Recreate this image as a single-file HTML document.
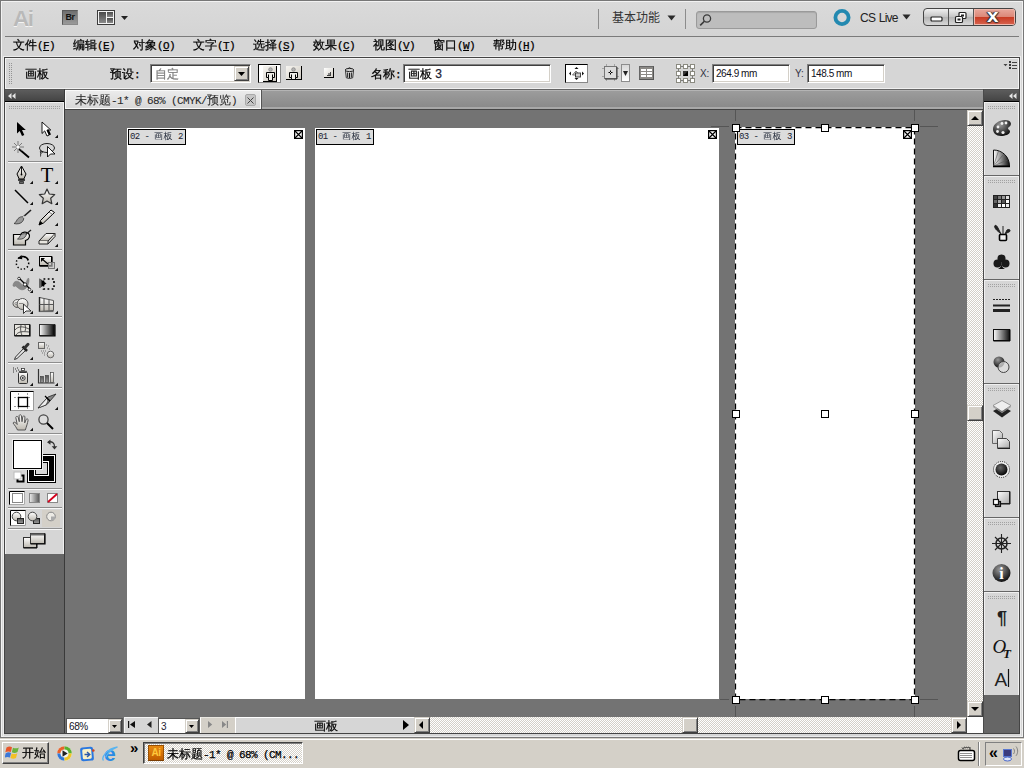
<!DOCTYPE html>
<html lang="zh-CN">
<head>
<meta charset="utf-8">
<title>Adobe Illustrator</title>
<style>
*{box-sizing:border-box;margin:0;padding:0}
html,body{width:1024px;height:768px;overflow:hidden;background:#d6d6d6}
body{position:relative;font-family:"Liberation Sans","WenQuanYi Zen Hei",sans-serif;font-size:12px;color:#000}
.a{position:absolute}
.cj{font-family:"Liberation Sans","WenQuanYi Zen Hei","Noto Sans CJK SC",sans-serif;font-size:12px;line-height:14px;white-space:nowrap;color:#000;-webkit-text-stroke-width:0.25px}
.cj i{font-style:normal;font-family:"Liberation Mono",monospace;font-size:11px;letter-spacing:-0.6px}
.cj u{text-decoration:underline;text-underline-offset:1px}
.tah{font-family:"Liberation Sans",sans-serif;font-size:11px;line-height:14px;white-space:nowrap}
.chk{background:repeating-conic-gradient(#fff 0 25%,#d4d0c8 0 50%) 0 0/2px 2px}
.sunk{background:#fff;border:1px solid;border-color:#808080 #fff #fff #808080;box-shadow:inset 1px 1px 0 #404040,inset -1px -1px 0 #d4d0c8}
.btn{background:#d4d0c8;border:1px solid;border-color:#fff #404040 #404040 #fff;box-shadow:inset -1px -1px 0 #808080}
.sb{background:#d4d0c8;border:1px solid;border-color:#d4d0c8 #404040 #404040 #d4d0c8;box-shadow:inset 1px 1px 0 #fff,inset -1px -1px 0 #808080}
.sep{height:1px;background:#8f8f8f;border-bottom:0}
.grp{left:984px;width:35px;background:#d6d6d6;border:1px solid #e6e6e6;border-right-color:#bdbdbd;border-bottom-color:#bdbdbd}
.grip{position:absolute;left:4px;top:5px;width:27px;height:3px;background:repeating-linear-gradient(90deg,#9a9a9a 0 1px,transparent 1px 2px),repeating-linear-gradient(#9a9a9a 0 1px,transparent 1px 2px);background-blend-mode:normal}
</style>
</head>
<body>
<!-- ===== window frame ===== -->
<div class="a" style="left:0;top:0;width:1024px;height:738px;background:#d6d6d6;border:1px solid #777;box-shadow:inset 0 0 0 1px #f2f2f2"></div>
<div class="a" style="left:3px;top:56px;width:1018px;height:681px;border:1px solid #ececec"></div>
<div class="a" style="left:4px;top:57px;width:1016px;height:677px;border:1px solid #444;background:#666"></div>

<!-- ===== app bar ===== -->
<div class="a" id="appbar" style="left:3px;top:2px;width:1018px;height:34px;background:linear-gradient(#dadada,#d4d4d4)"></div>
<div class="a" style="left:5px;top:36px;width:1014px;height:1px;background:#7b7b7b"></div>
<div class="a" style="left:13px;top:6px;font:bold 22.500px/26px 'Liberation Sans',sans-serif;color:#b9b9b9;letter-spacing:-1.5px;text-shadow:0 1px 0 #f4f4f4">Ai</div>
<div class="a" style="left:62px;top:10px;width:16px;height:15px;background:linear-gradient(#6e6e6e,#9a9a9a);border:1px solid #5a5a5a;border-right-color:#8a8a8a;border-bottom-color:#8a8a8a;font:bold 9px/13px 'Liberation Sans',sans-serif;color:#111;text-align:center;letter-spacing:-0.6px">Br</div>
<svg class="a" style="left:97px;top:10px" width="32" height="15" viewBox="0 0 32 15"><defs><linearGradient id="lg1" x1="0" y1="0" x2="0" y2="1"><stop offset="0" stop-color="#4a4a4a"/><stop offset="1" stop-color="#8a8a8a"/></linearGradient></defs><rect x="0.5" y="0.5" width="17" height="14" fill="#f4f4f4" stroke="#3c3c3c"/><rect x="2" y="2" width="7" height="11" fill="url(#lg1)"/><rect x="10" y="2" width="6" height="5" fill="url(#lg1)"/><rect x="10" y="8" width="6" height="5" fill="url(#lg1)"/><path d="M24 6h7l-3.5 4z" fill="#222"/></svg>
<div class="a" style="left:598px;top:9px;width:1px;height:20px;background:#8c8c8c"></div>
<div class="a" style="left:685px;top:9px;width:1px;height:20px;background:#8c8c8c"></div>
<div class="a" style="left:612px;top:10px;font:12px/16px 'Liberation Sans','Noto Sans CJK SC','WenQuanYi Zen Hei',sans-serif;color:#333;white-space:nowrap">基本功能</div>
<svg class="a" style="left:667px;top:15px" width="9" height="6"><path d="M0.5 0.5h8l-4 5z" fill="#2a2a2a"/></svg>
<div class="a" style="left:696px;top:11px;width:121px;height:18px;background:#bdbdbd;border:1px solid #9a9a9a;border-radius:3px;box-shadow:inset 0 1px 1px #a8a8a8"></div>
<svg class="a" style="left:699px;top:13px" width="14" height="14" viewBox="0 0 14 14"><circle cx="8" cy="5.5" r="3.6" fill="none" stroke="#3a3a3a" stroke-width="1.3"/><path d="M5.4 8.2L1.2 12.4" stroke="#3a3a3a" stroke-width="1.6"/></svg>
<svg class="a" style="left:832px;top:8px" width="20" height="20" viewBox="0 0 20 20"><circle cx="10" cy="9.5" r="6.6" fill="none" stroke="#2389b0" stroke-width="3.8"/></svg>
<div class="a" style="left:860px;top:10px;font:12px/16px 'Liberation Sans',sans-serif;color:#222;white-space:nowrap;letter-spacing:-0.75px;word-spacing:1px">CS Live</div>
<svg class="a" style="left:902px;top:14px" width="9" height="6"><path d="M0.5 0.5h8l-4 5z" fill="#2a2a2a"/></svg>
<!-- window buttons -->
<div class="a" style="left:923px;top:8px;width:93px;height:18px;border:1px solid #444;border-radius:4px;background:linear-gradient(#f0f0f0,#c4c4c4 50%,#b4b4b4 52%,#d8d8d8);overflow:hidden">
 <div class="a" style="left:24px;top:0;width:1px;height:16px;background:#555"></div>
 <div class="a" style="left:49px;top:0;width:1px;height:16px;background:#555"></div>
 <div class="a" style="left:50px;top:0;width:41px;height:16px;background:linear-gradient(#e8a89c,#dc8878 48%,#c83c24 52%,#d86450);box-shadow:inset 0 0 0 1px #f0b8ac"></div>
</div>
<svg class="a" style="left:930px;top:16px" width="14" height="8"><rect x="1" y="1" width="11" height="4" rx="1" fill="#fff" stroke="#222" stroke-width="1.2"/></svg>
<svg class="a" style="left:954px;top:11px" width="14" height="13" viewBox="0 0 14 13"><rect x="5" y="1.5" width="7" height="6" rx="1" fill="#fff" stroke="#222" stroke-width="1.2"/><rect x="7" y="3.5" width="3" height="2" fill="#222"/><rect x="1.5" y="5.5" width="7" height="6" rx="1" fill="#fff" stroke="#222" stroke-width="1.2"/><rect x="3.5" y="7.5" width="3" height="2" fill="#222"/></svg>
<div class="a" style="left:987px;top:6px;font:bold 18px/20px 'Liberation Sans',sans-serif;color:#fff;transform:scaleX(1.15);transform-origin:0 0;text-shadow:0 0 1px #333,0 1px 1px #333,1px 0 1px #333,-1px 0 1px #333">x</div>

<!-- ===== menu bar ===== -->
<div class="a cj" style="left:13px;top:38px">文件<i>(<u>F</u>)</i></div>
<div class="a cj" style="left:73px;top:38px">编辑<i>(<u>E</u>)</i></div>
<div class="a cj" style="left:133px;top:38px">对象<i>(<u>O</u>)</i></div>
<div class="a cj" style="left:193px;top:38px">文字<i>(<u>T</u>)</i></div>
<div class="a cj" style="left:253px;top:38px">选择<i>(<u>S</u>)</i></div>
<div class="a cj" style="left:313px;top:38px">效果<i>(<u>C</u>)</i></div>
<div class="a cj" style="left:373px;top:38px">视图<i>(<u>V</u>)</i></div>
<div class="a cj" style="left:433px;top:38px">窗口<i>(<u>W</u>)</i></div>
<div class="a cj" style="left:493px;top:38px">帮助<i>(<u>H</u>)</i></div>


<!-- ===== control bar ===== -->
<div class="a" id="ctrl" style="left:5px;top:58px;width:1014px;height:31px;border-top:1px solid #f4f4f4;border-left:1px solid #f4f4f4;border-right:1px solid #f4f4f4;border-bottom:1px solid #f0f0f0;background:#d6d6d6"></div>
<div class="a" style="left:8px;top:63px;width:4px;height:22px;background:conic-gradient(#949494 25%,rgba(0,0,0,0) 0) 0 0/2px 2px"></div>
<div class="a cj" style="left:25px;top:67px">画板</div>
<div class="a cj" style="left:110px;top:67px">预设<i>:</i></div>
<div class="a sunk" style="left:150px;top:64px;width:101px;height:19px"></div>
<div class="a cj" style="left:155px;top:67px;color:#808080">自定</div>
<div class="a sb" style="left:234px;top:66px;width:15px;height:15px"></div>
<svg class="a" style="left:238px;top:72px" width="7" height="4"><path d="M0 0h7l-3.5 4z" fill="#000"/></svg>
<!-- portrait / landscape -->
<div class="a" style="left:258px;top:64px;width:23px;height:19px;background:#fff;border:1px solid #000;border-right-color:#888;border-bottom-color:#888"></div>
<div class="a" style="left:263px;top:66px;width:14px;height:16px;background:linear-gradient(135deg,#f8f6f2,#cfcbc3);border-right:1.500px solid #000;border-bottom:1.500px solid #000"></div>
<svg class="a" style="left:263px;top:66px" width="14" height="16" viewBox="0 0 14 16"><circle cx="7.500" cy="3.500" r="1.800" fill="#b4b4b4" stroke="#808080" stroke-width=".7"/><path d="M3.500 6.500H11.500V11.500H9.500V14.500H5.500V11.500H3.500z" fill="#f0efea" stroke="#000" stroke-width="1"/><path d="M5.500 8.500V11.500M9.500 8.500V11.500" stroke="#000" stroke-width="1"/></svg>
<div class="a" style="left:286px;top:66px;width:16px;height:14px;background:linear-gradient(135deg,#f8f6f2,#cfcbc3);border-right:1.500px solid #000;border-bottom:1.500px solid #000"></div>
<svg class="a" style="left:286px;top:66px" width="14" height="13" viewBox="0 0 14 13"><circle cx="7.500" cy="3.500" r="1.800" fill="#b4b4b4" stroke="#808080" stroke-width=".7"/><path d="M5.500 13V11.500H3.500V6.500H11.500V11.500H9.500V13" fill="#f0efea" stroke="#000" stroke-width="1"/><path d="M5.500 8.500V11.500M9.500 8.500V11.500" stroke="#000" stroke-width="1"/></svg>
<!-- new / delete artboard -->
<div class="a" style="left:324px;top:68px;width:10px;height:10px;background:linear-gradient(135deg,#fff,#d4d0c8);border-right:1.500px solid #000;border-bottom:1.500px solid #000"></div>
<div class="a" style="left:327px;top:72px;width:4px;height:4px;border-right:1px solid #444;border-bottom:1px solid #444;background:linear-gradient(135deg,rgba(0,0,0,0) 50%,#888 50%)"></div>
<svg class="a" style="left:343px;top:66px" width="13" height="14" viewBox="0 0 13 14"><path d="M2.500 4.500L3.300 11.800Q6.500 13.200 9.700 11.800L10.500 4.500" fill="#e4e4e4" stroke="#333" stroke-width="1"/><ellipse cx="6.500" cy="4" rx="4.300" ry="1.600" fill="#d0d0d0" stroke="#222" stroke-width="1"/><path d="M5 2.600Q6.500 1 8 2.600" fill="none" stroke="#222" stroke-width="1"/><path d="M4.700 6.500V11.500M6.500 6.800V12M8.300 6.500V11.500" stroke="#111" stroke-width="1"/></svg>
<div class="a cj" style="left:371px;top:67px">名称<i>:</i></div>
<div class="a sunk" style="left:403px;top:64px;width:148px;height:19px"></div>
<div class="a cj" style="left:408px;top:67px">画板 <span style="font-family:'Liberation Sans',sans-serif;font-size:12px;color:#223">3</span></div>
<!-- move with artboard -->
<div class="a" style="left:565px;top:64px;width:23px;height:19px;background:#fff;border:1px solid #000;border-right-color:#888;border-bottom-color:#888"></div>
<svg class="a" style="left:568px;top:66px" width="17" height="15" viewBox="0 0 17 15"><path d="M8.5 1l2 2h-4zM8.5 14l-2-2h4zM1 7.5l2-2v4zM16 7.5l-2-2v4z" fill="#111"/><path d="M4.5 9l3.5-4 3.5 4z" fill="#ddd" stroke="#555" stroke-width=".8"/><rect x="7.5" y="7" width="5" height="4" fill="#ccc" stroke="#333" stroke-width=".9"/></svg>
<!-- show options -->
<svg class="a" style="left:601px;top:63px" width="20" height="20" viewBox="0 0 20 20"><path d="M5.500 1v17M13.500 1v17M1 5.500h17M1 13.500h17" stroke="#a4a4a4" stroke-width="1"/><rect x="3.500" y="3.500" width="12" height="12" fill="#dcdcdc" stroke="#777"/><path d="M4 16h12V4" fill="none" stroke="#333" stroke-width="1"/><path d="M9.500 7.500v1.500M9.500 10v1.500M7.500 9.500h1.500M10 9.500h1.500" stroke="#000" stroke-width="1"/></svg>
<div class="a" style="left:621px;top:64px;width:9px;height:18px;background:linear-gradient(#d8d8d8,#fff);border:1px solid #8c8c8c"></div>
<svg class="a" style="left:623px;top:71px" width="5" height="5"><path d="M0 0h5l-2.500 5z" fill="#222"/></svg>
<div class="a" style="left:639px;top:66px;width:15px;height:14px;background:#8c8a86;border:1px solid #666;border-right-color:#555;border-bottom-color:#555"></div>
<div class="a" style="left:641px;top:69px;width:11px;height:2px;background:#fff;box-shadow:0 3px 0 #fff,0 6px 0 #fff"></div>
<div class="a" style="left:646px;top:68px;width:1px;height:10px;background:#8c8a86"></div>
<!-- reference point -->
<svg class="a" style="left:676px;top:64px" width="19" height="19" viewBox="0 0 19 19"><rect x="2.500" y="2.500" width="14" height="14" fill="none" stroke="#222" stroke-dasharray="1 1"/><g fill="#fff" stroke="#8a8a80" stroke-width="1"><rect x=".5" y=".5" width="4" height="4"/><rect x="7.500" y=".5" width="4" height="4"/><rect x="14.500" y=".5" width="4" height="4"/><rect x=".5" y="7.500" width="4" height="4"/><rect x="14.500" y="7.500" width="4" height="4"/><rect x=".5" y="14.500" width="4" height="4"/><rect x="7.500" y="14.500" width="4" height="4"/><rect x="14.500" y="14.500" width="4" height="4"/></g><path d="M7 12l5-5v5z" fill="#000"/><rect x="7" y="7" width="5" height="5" fill="#000" opacity=".75"/></svg>
<div class="a tah" style="left:700px;top:67px;color:#334;font-size:10px;letter-spacing:-0.2px">X:</div>
<div class="a sunk" style="left:712px;top:64px;width:78px;height:19px"></div>
<div class="a tah" style="left:716px;top:67px;color:#112;font-size:10px;letter-spacing:-0.45px">264.9 mm</div>
<div class="a tah" style="left:795px;top:67px;color:#334;font-size:10px;letter-spacing:-0.2px">Y:</div>
<div class="a sunk" style="left:807px;top:64px;width:78px;height:19px"></div>
<div class="a tah" style="left:811px;top:67px;color:#112;font-size:10px;letter-spacing:-0.45px">148.5 mm</div>
<svg class="a" style="left:1003px;top:60px" width="15" height="10" viewBox="0 0 15 10"><path d="M.5 4h4l-2 2.200z" fill="#444"/><path d="M6 1h2v2h-2zM6 4h2v2h-2zM6 7h2v2h-2z" fill="#3a3a3a"/><path d="M9 2.500h5M9 5.500h5M9 8.500h5" stroke="#444" stroke-width="1"/></svg>


<!-- ===== left dock ===== -->
<div class="a" id="ldock" style="left:5px;top:89px;width:59px;height:644px;background:#666"></div>
<div class="a" style="left:64px;top:89px;width:1px;height:644px;background:#3a3a3a"></div>
<div class="a" style="left:5px;top:89px;width:59px;height:13px;background:linear-gradient(#4a4a4a,#5c5c5c 10%,#444);border-bottom:1px solid #000"></div>
<svg class="a" style="left:8px;top:93px" width="8" height="6"><path d="M3.500 0v6l-3.500-3zM7.500 0v6l-3.500-3z" fill="#e4e4e4"/></svg>
<div class="a" style="left:5px;top:102px;width:59px;height:452px;background:#d6d6d6;border-left:1px solid #f0f0f0;border-top:1px solid #f0f0f0;border-right:1px solid #f0f0f0"></div>
<div class="a" style="left:9px;top:106px;width:52px;height:3px;background:repeating-linear-gradient(90deg,#a2a2a2 0 1px,rgba(0,0,0,0) 1px 2px)"></div>
<div class="a" style="left:9px;top:107px;width:52px;height:1px;background:#d6d6d6"></div>
<div class="a" style="left:8px;top:161px;width:54px;height:2px;background:#8e8e8e;border-bottom:1px solid #f8f8f8"></div>
<div class="a" style="left:8px;top:249px;width:54px;height:2px;background:#8e8e8e;border-bottom:1px solid #f8f8f8"></div>
<div class="a" style="left:8px;top:316px;width:54px;height:2px;background:#8e8e8e;border-bottom:1px solid #f8f8f8"></div>
<div class="a" style="left:8px;top:362px;width:54px;height:2px;background:#8e8e8e;border-bottom:1px solid #f8f8f8"></div>
<div class="a" style="left:8px;top:387px;width:54px;height:2px;background:#8e8e8e;border-bottom:1px solid #f8f8f8"></div>
<div class="a" style="left:8px;top:433px;width:54px;height:2px;background:#8e8e8e;border-bottom:1px solid #f8f8f8"></div>
<div class="a" style="left:8px;top:488px;width:54px;height:2px;background:#8e8e8e;border-bottom:1px solid #f8f8f8"></div>
<div class="a" style="left:8px;top:507px;width:54px;height:2px;background:#8e8e8e;border-bottom:1px solid #f8f8f8"></div>
<div class="a" style="left:8px;top:528px;width:54px;height:2px;background:#8e8e8e;border-bottom:1px solid #f8f8f8"></div>
<svg class="a" style="left:4px;top:102px" width="60" height="452" viewBox="4 102 60 452">
<defs><linearGradient id="gw" x1="0" y1="0" x2="0" y2="1"><stop offset="0" stop-color="#fff"/><stop offset="1" stop-color="#bdb9b0"/></linearGradient><linearGradient id="gh" x1="0" y1="0" x2="1" y2="0"><stop offset="0" stop-color="#fff"/><stop offset="1" stop-color="#000"/></linearGradient><linearGradient id="gg" x1="0" y1="0" x2="1" y2="0"><stop offset="0" stop-color="#eee"/><stop offset="1" stop-color="#555"/></linearGradient><linearGradient id="gd" x1="0" y1="0" x2="0" y2="1"><stop offset="0" stop-color="#555"/><stop offset="1" stop-color="#999"/></linearGradient></defs>
<path d="M0 0v11.500l2.700-2.600 2.300 5.100 2.300-1-2.300-5h3.800z" transform="translate(17,122)" fill="#000"/>
<path d="M0 0v11.500l2.700-2.600 2.300 5.100 2.300-1-2.300-5h3.800z" transform="translate(42,122)" fill="#fff" stroke="#000" stroke-width=".9"/><path d="M46.700 130.300l2.300 5 2-.9-2.300-5z" fill="#000"/>
<path d="M58 138h-3.200l3.200-3.200z" fill="#111"/><path d="M19 149l10 8.500" stroke="#000" stroke-width="1.800"/><path d="M18 141v12M12 147h12M14 143l8 8M22 143l-8 8" stroke="#555" stroke-width=".7"/><circle cx="18" cy="147" r="1.500" fill="#fff"/>
<ellipse cx="47" cy="148" rx="7.500" ry="4.500" fill="none" stroke="#222" stroke-width="1"/><path d="M41 150c-1.500 2 0 3.500 1 3s0-2-1-1.500 0 3.500-.5 5" fill="none" stroke="#222" stroke-width=".9"/><path d="M47.500 146.500v10.500l3-3h4.500z" fill="#fff" stroke="#000" stroke-width=".9"/>
<path d="M21.500 166l4.500 8-2.200 5h-4.600l-2.200-5z" fill="url(#gw)" stroke="#000" stroke-width="1"/><path d="M21.500 167v7" stroke="#000" stroke-width=".9"/><circle cx="21.500" cy="174.500" r=".9"/><path d="M18 180h7" stroke="#000" stroke-width="1.400"/><path d="M19.500 181.500h4v2h-4z" fill="#666" stroke="#000" stroke-width=".6"/>
<path d="M33 184h-3.200l3.200-3.200z" fill="#111"/><text x="47" y="181.800" text-anchor="middle" font-family="Liberation Serif,serif" font-size="20.500" fill="#000">T</text>
<path d="M58 184h-3.200l3.200-3.200z" fill="#111"/><path d="M15 190l13 13" stroke="#000" stroke-width="1.500"/>
<path d="M33 205h-3.200l3.200-3.200z" fill="#111"/><path d="M47 189l2.300 5 5.400.6-4 3.700 1.100 5.400-4.800-2.700-4.800 2.700 1.100-5.400-4-3.700 5.400-.6z" fill="url(#gw)" stroke="#333" stroke-width="1.200" stroke-linejoin="round"/>
<path d="M58 205h-3.200l3.200-3.200z" fill="#111"/><path d="M31 210l-9 8" stroke="#222" stroke-width="1.600"/><path d="M23 217c-2-1-5 1-6 3s-2 3-3 3.500c3 1 7 0 8.500-2s1.500-3.500.5-4.500z" fill="#999" stroke="#333" stroke-width=".8"/><path d="M24 215.500l-1.500 1.500 1 1 1.500-1.500z" fill="#ddd"/>
<path d="M51 210l3.500 2.500-11 10.500-4.500 2 1.500-4.500z" fill="url(#gw)" stroke="#000" stroke-width="1"/><path d="M39 225l1.500-4 2.500 2.500z" fill="#000"/><path d="M49 212l3.500 2.500" stroke="#555" stroke-width=".8"/>
<path d="M58 226h-3.200l3.200-3.200z" fill="#111"/><path d="M13.500 234.500h7c2-3 6-3 8-1s1 6-3 7v4.500h-12z" fill="url(#gw)" stroke="#000" stroke-width="1.200"/><path d="M31 230l-6 5" stroke="#222" stroke-width="1.300"/><path d="M26 234c-2-1-5 0-6 2s-1.500 2.500-2.500 3c3 .5 6 0 7.500-2s1.500-2.500 1-3z" fill="#aaa" stroke="#333" stroke-width=".8"/>
<path d="M46 233.500h9l-7 7.500h-9z" fill="url(#gw)" stroke="#222" stroke-width="1"/><path d="M39 241v3h9v-3M48 244l7-7.500v-3" fill="#e8e6e0" stroke="#222" stroke-width="1"/>
<path d="M58 247h-3.200l3.200-3.200z" fill="#111"/><circle cx="22.500" cy="263" r="6.200" fill="none" stroke="#000" stroke-width="1.500" stroke-dasharray="1.300 2.100" stroke-dashoffset="0"/><path d="M22 256.500c2.500-.3 5 1 6.300 3.300" fill="none" stroke="#000" stroke-width="1.400"/><path d="M17.500 258.500l4-3.500.8 4.300z" fill="#000"/>
<path d="M33 271h-3.200l3.200-3.200z" fill="#111"/><rect x="39.500" y="256.500" width="12" height="9" fill="url(#gw)" stroke="#000" stroke-width="1"/><path d="M39.500 266h12.500v-9.500" fill="none" stroke="#000" stroke-width="1.300"/><rect x="48.500" y="262.500" width="6" height="6" fill="#ccc" fill-opacity=".6" stroke="#777" stroke-width="1"/><path d="M42 259l6 5" stroke="#000" stroke-width="1.200"/><path d="M41 258h4l-4 4z" fill="#000"/>
<path d="M58 271h-3.200l3.200-3.200z" fill="#111"/><path d="M13 286c0-4 3-6 6-4s4 5 6 3 1-5 3.500-7c1 2 .5 5-1 8s-5 5-8 3-4-4-5-2.500z" fill="#888" stroke="#777" stroke-width=".6"/><path d="M19 278l11 11" stroke="#000" stroke-width="1.200"/><circle cx="19" cy="278.500" r="1.300" fill="#fff" stroke="#000" stroke-width=".7"/><circle cx="25" cy="284.500" r="1.700" fill="#fff" stroke="#000" stroke-width=".8"/><circle cx="29.500" cy="289.500" r="1.300" fill="#fff" stroke="#000" stroke-width=".7"/>
<path d="M33 293h-3.200l3.200-3.200z" fill="#111"/><rect x="43.500" y="279" width="10.500" height="10" fill="none" stroke="#000" stroke-width="1.600" stroke-dasharray="1.800 2.400"/><path d="M39.500 278.500v9.500l7-4.500z" fill="#000"/><path d="M39.500 278.500v9.500l2-1.300v-6.900z" fill="#666"/>
<ellipse cx="17.500" cy="303.500" rx="4.500" ry="4" fill="url(#gw)" stroke="#555" stroke-width="1"/><ellipse cx="22.500" cy="304" rx="5.500" ry="5.500" fill="url(#gw)" stroke="#555" stroke-width="1"/><circle cx="16" cy="303.500" r="1" fill="#fff" stroke="#333" stroke-width=".5"/><path d="M19.500 303.500h3" stroke="#333" stroke-dasharray="1 1"/><path d="M23.500 304v9.500l2.500-2.500h5z" fill="#fff" stroke="#222" stroke-width=".9"/>
<path d="M33 314h-3.200l3.200-3.200z" fill="#111"/><path d="M39.500 297.500v14l14-1v-10z" fill="url(#gw)" stroke="#555" stroke-width="1"/><path d="M39.500 297v15" stroke="#222" stroke-width="1.400"/><path d="M44 298.500v12.500M49 299.500v11M39.500 304.500h14" stroke="#555" stroke-width="1"/><path d="M39.500 311.500h14" stroke="#666" stroke-width="1.200"/>
<path d="M58 314h-3.200l3.200-3.200z" fill="#111"/><rect x="14.500" y="324.500" width="15" height="11" fill="#e8e6e0" stroke="#333" stroke-width="1"/><path d="M14.500 336h15.500v-11.500" fill="none" stroke="#000" stroke-width="1.200"/><path d="M15 330c3-4 8-4 14-1M21 325c-1 4 0 8 1 10.500M16 335c2-3 5-4 13-3M25 325c1 3 .5 5 0 6" fill="none" stroke="#444" stroke-width=".9"/>
<rect x="39.500" y="324.500" width="15" height="11" fill="url(#gh)" stroke="#333" stroke-width="1"/><path d="M39.500 336h15.500v-11.500" fill="none" stroke="#000" stroke-width="1.200"/>
<path d="M24 348l-8.500 9-1 2.500 2.500-1 9-8.500z" fill="#e8e8e8" stroke="#222" stroke-width=".9"/><path d="M22.500 346.500l4.500 4.500" stroke="#222" stroke-width="2.600"/><path d="M25 347.500l3-3.200" stroke="#333" stroke-width="3" stroke-linecap="round"/>
<path d="M33 360h-3.200l3.200-3.200z" fill="#111"/><rect x="38.500" y="342.500" width="6" height="6" fill="url(#gw)" stroke="#666" stroke-width="1"/><circle cx="50.500" cy="354.500" r="3.300" fill="url(#gw)" stroke="#666" stroke-width="1"/><path d="M46 345h1M48 346h1M47 348h1M49 349h1M41 351h1M43 351h1M45 351h1M42 353h1M44 353h1M44 355h1" stroke="#777" stroke-width="1"/>
<rect x="18.500" y="372.500" width="9" height="11" rx="1" fill="url(#gw)" stroke="#333" stroke-width="1"/><rect x="21.500" y="368.500" width="3" height="2" fill="#fff" stroke="#333" stroke-width=".8"/><path d="M19 371.500h8" stroke="#555" stroke-width="1.300"/><circle cx="22.800" cy="378" r="2.400" fill="#ddd" stroke="#333" stroke-width=".9"/><circle cx="22.800" cy="378" r=".9" fill="#333"/><path d="M13 368h1M15 369h1M17 368h1M13 370h1M16 371h1M13 372h1M18 370h1" stroke="#333" stroke-width="1"/>
<path d="M33 386h-3.200l3.200-3.200z" fill="#111"/><path d="M38.500 369v14h16" fill="none" stroke="#333" stroke-width="1.200"/><rect x="40.500" y="376.500" width="3" height="6" fill="url(#gd)" stroke="#444" stroke-width=".7"/><rect x="45.500" y="375.500" width="3" height="7" fill="url(#gd)" stroke="#444" stroke-width=".7"/><rect x="50.500" y="372.500" width="3" height="10" fill="url(#gw)" stroke="#444" stroke-width=".7"/>
<path d="M58 386h-3.200l3.200-3.200z" fill="#111"/><rect x="10" y="391" width="24" height="20" fill="#fff"/><path d="M10.500 411v-19.500h23.500" fill="none" stroke="#000" stroke-width="1"/><path d="M10.500 410.500h23v-19" fill="none" stroke="#9a9a9a" stroke-width="1"/><path d="M18.500 393v17M27.500 393v17M14 397.500h17M14 406.500h17" stroke="#999" stroke-width="1" stroke-dasharray="2 1.500"/><rect x="18.500" y="397.500" width="9" height="9" fill="#fff" stroke="#000" stroke-width="1.300"/>
<path d="M56 394l-8 3-10 11 9-3.500z" fill="#888" stroke="#222" stroke-width=".8"/><path d="M47 398l-9 10 8-3 2-4z" fill="#eee" stroke="#222" stroke-width=".7"/><path d="M45 396l5 5" stroke="#000" stroke-width="1.200"/>
<path d="M58 410h-3.200l3.200-3.200z" fill="#111"/><path d="M17.500 430c-1-2.500-3-5-4.500-7 .5-1.200 2-1 3 .2l1.200 1.300-1.400-7c0-1.300 1.800-1.500 2.300-.3l1.200 4.500-.2-6c.2-1.300 2-1.300 2.300 0l.6 6 .8-5c.4-1.200 2-1 2.100.2l-.2 6 1.500-3.500c.7-1 2-.5 1.900.7-.6 3.300-1.500 6-2.800 9.900z" fill="url(#gw)" stroke="#555" stroke-width="1"/>
<path d="M33 431h-3.200l3.200-3.200z" fill="#111"/><circle cx="43.500" cy="419.500" r="4.600" fill="#ddd" stroke="#444" stroke-width="1.300"/><path d="M47 423l6 6" stroke="#000" stroke-width="2"/>
<rect x="27.500" y="454.500" width="28" height="28" fill="#000" stroke="#000"/><rect x="28.500" y="455.500" width="26" height="26" fill="none" stroke="#fff"/><rect x="34.500" y="461.500" width="14" height="14" fill="#d6d6d6" stroke="#fff"/><rect x="35.500" y="462.500" width="12" height="12" fill="none" stroke="#000" stroke-width="1"/>
<rect x="12.500" y="439.500" width="30" height="30" fill="#fff" stroke="#eee"/><rect x="13.500" y="440.500" width="28" height="28" fill="#fff" stroke="#000"/>
<path d="M48.500 442c3.500-1 6.500 1.500 6 5" fill="none" stroke="#333" stroke-width="1.300"/><path d="M47 442.300l3.500-2.800v5.300zM54.500 449.500l-2.800-3.200h5.600z" fill="#333"/>
<rect x="17.500" y="475.500" width="6" height="6" fill="#fff" stroke="#000" stroke-width="2"/><rect x="14" y="472" width="7" height="7" fill="#fff" stroke="#bbb" stroke-width="1"/>
<rect x="9" y="491" width="16" height="14" fill="#fff"/><path d="M9.500 505v-13.500h15.500" fill="none" stroke="#000"/><path d="M9.500 504.500h15v-13" fill="none" stroke="#aaa"/><rect x="12.500" y="493.500" width="10" height="9" fill="#fff" stroke="#888"/>
<rect x="29.500" y="493.500" width="10" height="9" fill="url(#gg)" stroke="#888"/>
<rect x="47.500" y="493.500" width="10" height="9" fill="#fff" stroke="#888"/><path d="M48 502l9-8" stroke="#d4001c" stroke-width="1.800"/>
<rect x="42" y="510" width="18" height="17" fill="#d4d0c8"/><rect x="10" y="510" width="16" height="16" fill="#fff"/><path d="M10.500 526v-15.500h15.500" fill="none" stroke="#000"/><path d="M10.500 525.500h15v-15" fill="none" stroke="#999"/>
<circle cx="16.500" cy="516.500" r="4.300" fill="url(#gw)" stroke="#444"/><rect x="17.500" y="518.500" width="6" height="5" fill="url(#gd)" stroke="#222"/>
<rect x="33.500" y="518.500" width="6" height="5" fill="url(#gd)" stroke="#222"/><circle cx="32.500" cy="516.500" r="4.300" fill="url(#gw)" stroke="#444"/>
<circle cx="51" cy="516.500" r="4.300" fill="#eceae4" stroke="#888"/><path d="M51 516.500h4.300a4.300 4.300 0 0 1-4.300 4.300z" fill="#aaa"/>
<rect x="23.500" y="537.500" width="13" height="10" fill="url(#gw)" stroke="#333" stroke-width="1"/><path d="M23.500 548h13.500v-10" fill="none" stroke="#000" stroke-width="1"/><rect x="30.500" y="533.500" width="14" height="10" fill="url(#gw)" stroke="#333" stroke-width="1"/><path d="M30.500 534.500h14" stroke="#666" stroke-width="2"/><path d="M30.500 544h14.500v-10.500" fill="none" stroke="#000" stroke-width="1.200"/>
</svg>


<!-- ===== tab row ===== -->
<div class="a" id="tabrow" style="left:65px;top:89px;width:918px;height:21px;background:linear-gradient(#b4b4b4 0 1px,#9c9c9c 1px,#8a8a8a 17px,#a8a8a8 17px);border-top:1px solid #666;border-bottom:1px solid #444"></div>
<div class="a" style="left:983px;top:89px;width:1px;height:645px;background:#4a4a4a"></div>
<div class="a" style="left:65px;top:90px;width:196px;height:19px;background:linear-gradient(#ebebeb,#d8d8d8);border:1px solid #fafafa"></div>
<div class="a" style="left:261px;top:90px;width:1px;height:19px;background:#555"></div>
<div class="a cj" style="left:75px;top:93px;color:#2a2a2a;-webkit-text-stroke-width:0.1px">未标题<i>-1* @ 68% (CMYK/</i>预览<i>)</i></div>
<div class="a" style="left:245px;top:94px;width:11px;height:12px;background:#c6c6c6;border:1px solid #aaa;border-radius:2px"></div>
<svg class="a" style="left:247px;top:97px" width="7" height="7"><path d="M0.500 0.500l6 6M6.500 0.500l-6 6" stroke="#444" stroke-width="1"/></svg>


<!-- ===== canvas ===== -->
<div class="a" id="canvas" style="left:65px;top:110px;width:902px;height:607px;background:#737373"></div>
<div class="a" style="left:126.700px;top:127.800px;width:178.700px;height:571.400px;background:#fff"></div>
<div class="a" style="left:314.700px;top:127.800px;width:404.700px;height:571.400px;background:#fff"></div>
<div class="a" style="left:735.400px;top:127px;width:179.700px;height:572.400px;background:#fff"></div>
<svg class="a" style="left:735px;top:127px" width="181" height="574"><rect x=".5" y=".5" width="179" height="572" fill="none" stroke="#000" stroke-width="1.250" stroke-dasharray="6 4"/></svg>
<div class="a" style="left:735px;top:110px;width:1px;height:11px;background:#555"></div>
<div class="a" style="left:735px;top:706px;width:1px;height:11px;background:#555"></div>
<div class="a" style="left:914px;top:110px;width:1px;height:11px;background:#555"></div>
<div class="a" style="left:914px;top:706px;width:1px;height:11px;background:#555"></div>
<div class="a" style="left:711px;top:126px;width:18px;height:1px;background:#555"></div>
<div class="a" style="left:920px;top:126px;width:18px;height:1px;background:#555"></div>
<div class="a" style="left:720px;top:699px;width:9px;height:1px;background:#555"></div>
<div class="a" style="left:920px;top:699px;width:18px;height:1px;background:#555"></div>
<div class="a" style="left:128px;top:129px;width:58px;height:16px;background:#dcdcdc;border:1px solid #000;font:9px/14px 'Liberation Mono',monospace;letter-spacing:-0.600px;color:#1a2232;padding-left:1px;white-space:nowrap">02 - <span style="font:9px/13px 'Liberation Sans','WenQuanYi Zen Hei',sans-serif;letter-spacing:0.600px">画板</span> 2</div>
<div class="a" style="left:316px;top:129px;width:58px;height:16px;background:#dcdcdc;border:1px solid #000;font:9px/14px 'Liberation Mono',monospace;letter-spacing:-0.600px;color:#1a2232;padding-left:1px;white-space:nowrap">01 - <span style="font:9px/13px 'Liberation Sans','WenQuanYi Zen Hei',sans-serif;letter-spacing:0.600px">画板</span> 1</div>
<div class="a" style="left:737px;top:129px;width:58px;height:16px;background:#dcdcdc;border:1px solid #000;font:9px/14px 'Liberation Mono',monospace;letter-spacing:-0.600px;color:#1a2232;padding-left:1px;white-space:nowrap">03 - <span style="font:9px/13px 'Liberation Sans','WenQuanYi Zen Hei',sans-serif;letter-spacing:0.600px">画板</span> 3</div>
<svg class="a" style="left:294px;top:130px" width="9" height="9"><rect x=".600" y=".600" width="7.800" height="7.800" fill="#fff" stroke="#000" stroke-width="1.300"/><path d="M1 1l7 7M8 1l-7 7" stroke="#000" stroke-width="1.200"/></svg>
<svg class="a" style="left:708px;top:130px" width="9" height="9"><rect x=".600" y=".600" width="7.800" height="7.800" fill="#fff" stroke="#000" stroke-width="1.300"/><path d="M1 1l7 7M8 1l-7 7" stroke="#000" stroke-width="1.200"/></svg>
<svg class="a" style="left:903px;top:130px" width="9" height="9"><rect x=".600" y=".600" width="7.800" height="7.800" fill="#fff" stroke="#000" stroke-width="1.300"/><path d="M1 1l7 7M8 1l-7 7" stroke="#000" stroke-width="1.200"/></svg>
<div class="a" style="left:732px;top:124px;width:8px;height:8px;background:#fff;border:1px solid #000"></div>
<div class="a" style="left:821px;top:124px;width:8px;height:8px;background:#fff;border:1px solid #000"></div>
<div class="a" style="left:911px;top:124px;width:8px;height:8px;background:#fff;border:1px solid #000"></div>
<div class="a" style="left:732px;top:410px;width:8px;height:8px;background:#fff;border:1px solid #000"></div>
<div class="a" style="left:821px;top:410px;width:8px;height:8px;background:#fff;border:1px solid #000"></div>
<div class="a" style="left:911px;top:410px;width:8px;height:8px;background:#fff;border:1px solid #000"></div>
<div class="a" style="left:732px;top:696px;width:8px;height:8px;background:#fff;border:1px solid #000"></div>
<div class="a" style="left:821px;top:696px;width:8px;height:8px;background:#fff;border:1px solid #000"></div>
<div class="a" style="left:911px;top:696px;width:8px;height:8px;background:#fff;border:1px solid #000"></div>


<!-- ===== scrollbars / status ===== -->
<div class="a chk" style="left:967px;top:110px;width:16px;height:607px"></div>
<div class="a sb" style="left:967px;top:110px;width:16px;height:16px"></div>
<svg class="a" style="left:971px;top:116px" width="8" height="4"><path d="M0 4h8l-4-4z" fill="#000"/></svg>
<div class="a sb" style="left:967px;top:405px;width:16px;height:16px"></div>
<div class="a sb" style="left:967px;top:701px;width:16px;height:16px"></div>
<svg class="a" style="left:971px;top:707px" width="8" height="4"><path d="M0 0h8l-4 4z" fill="#000"/></svg>
<div class="a" style="left:967px;top:717px;width:16px;height:16px;background:#fff"></div>
<!-- status bar -->
<div class="a" style="left:65px;top:717px;width:902px;height:16px;background:#737373"></div>
<div class="a" style="left:66px;top:718px;width:57px;height:15px;background:#fff;border-left:1px solid #555;border-top:1px solid #555;border-right:1px solid #555"></div>
<div class="a tah" style="left:69px;top:720px;color:#112;font-size:10px;letter-spacing:-0.400px">68%</div>
<div class="a sb" style="left:108px;top:719px;width:14px;height:14px"></div>
<svg class="a" style="left:112px;top:725px" width="5" height="3"><path d="M0 0h5l-2.500 3z" fill="#000"/></svg>
<div class="a" style="left:124px;top:717px;width:34px;height:16px;background:#d6d6d6;border-left:1px solid #f4f4f4;border-top:1px solid #f4f4f4"></div>
<svg class="a" style="left:128px;top:721px" width="24" height="7" viewBox="0 0 24 7"><path d="M0.600 0v7" stroke="#111" stroke-width="1.200"/><path d="M7 0v7l-5-3.500z" fill="#111"/><path d="M23.500 0v7l-4.500-3.500z" fill="#222"/></svg>
<div class="a" style="left:158px;top:718px;width:42px;height:15px;background:#fff;border-left:1px solid #555;border-top:1px solid #555;border-right:1px solid #555"></div>
<div class="a tah" style="left:161px;top:720px;color:#223;font-size:10px">3</div>
<div class="a sb" style="left:185px;top:719px;width:14px;height:14px"></div>
<svg class="a" style="left:189px;top:725px" width="5" height="3"><path d="M0 0h5l-2.500 3z" fill="#000"/></svg>
<div class="a" style="left:200px;top:717px;width:35px;height:16px;background:#d4d0c8;border-left:1px solid #fff;border-top:1px solid #e8e6e0"></div>
<svg class="a" style="left:207px;top:721px" width="22" height="7" viewBox="0 0 22 7"><path d="M1 0v7l4.200-3.500z" fill="#888"/><path d="M15 0v7l4.200-3.500z" fill="#888"/><path d="M20.400 0v7" stroke="#888" stroke-width="1.200"/></svg>
<div class="a" style="left:235px;top:717px;width:179px;height:16px;background:#d6d6d6;border-left:1px solid #fff;border-top:1px solid #fff"></div>
<div class="a cj" style="left:314px;top:719px">画板</div>
<svg class="a" style="left:403px;top:720px" width="6" height="10"><path d="M0 0v10l6-5z" fill="#000"/></svg>
<div class="a chk" style="left:414px;top:717px;width:553px;height:16px"></div>
<div class="a sb" style="left:414px;top:717px;width:16px;height:16px"></div>
<svg class="a" style="left:419px;top:721px" width="4" height="8"><path d="M4 0v8l-4-4z" fill="#000"/></svg>
<div class="a sb" style="left:682px;top:717px;width:16px;height:16px"></div>
<div class="a sb" style="left:951px;top:717px;width:16px;height:16px"></div>
<svg class="a" style="left:957px;top:721px" width="4" height="8"><path d="M0 0v8l4-4z" fill="#000"/></svg>


<!-- ===== right dock ===== -->
<div class="a" id="rdock" style="left:984px;top:89px;width:35px;height:644px;background:#666"></div>
<div class="a" style="left:984px;top:89px;width:35px;height:13px;background:linear-gradient(#4a4a4a,#5c5c5c 10%,#444);border-bottom:1px solid #000"></div>
<svg class="a" style="left:1009px;top:93px" width="8" height="6"><path d="M3.500 0v6l-3.500-3zM7.500 0v6l-3.500-3z" fill="#e4e4e4"/></svg>
<div class="a" style="left:984px;top:102px;width:35px;height:73px;background:#d6d6d6;border-left:1px solid #f0f0f0;border-top:1px solid #f0f0f0;border-right:1px solid #f0f0f0"></div>
<div class="a" style="left:988px;top:106px;width:28px;height:3px;background:repeating-linear-gradient(90deg,#a2a2a2 0 1px,rgba(0,0,0,0) 1px 2px)"></div><div class="a" style="left:988px;top:107px;width:28px;height:1px;background:#d6d6d6"></div>
<div class="a" style="left:984px;top:176px;width:35px;height:103px;background:#d6d6d6;border-left:1px solid #f0f0f0;border-top:1px solid #f0f0f0;border-right:1px solid #f0f0f0"></div>
<div class="a" style="left:988px;top:180px;width:28px;height:3px;background:repeating-linear-gradient(90deg,#a2a2a2 0 1px,rgba(0,0,0,0) 1px 2px)"></div><div class="a" style="left:988px;top:181px;width:28px;height:1px;background:#d6d6d6"></div>
<div class="a" style="left:984px;top:280px;width:35px;height:103px;background:#d6d6d6;border-left:1px solid #f0f0f0;border-top:1px solid #f0f0f0;border-right:1px solid #f0f0f0"></div>
<div class="a" style="left:988px;top:284px;width:28px;height:3px;background:repeating-linear-gradient(90deg,#a2a2a2 0 1px,rgba(0,0,0,0) 1px 2px)"></div><div class="a" style="left:988px;top:285px;width:28px;height:1px;background:#d6d6d6"></div>
<div class="a" style="left:984px;top:384px;width:35px;height:133px;background:#d6d6d6;border-left:1px solid #f0f0f0;border-top:1px solid #f0f0f0;border-right:1px solid #f0f0f0"></div>
<div class="a" style="left:988px;top:388px;width:28px;height:3px;background:repeating-linear-gradient(90deg,#a2a2a2 0 1px,rgba(0,0,0,0) 1px 2px)"></div><div class="a" style="left:988px;top:389px;width:28px;height:1px;background:#d6d6d6"></div>
<div class="a" style="left:984px;top:518px;width:35px;height:73px;background:#d6d6d6;border-left:1px solid #f0f0f0;border-top:1px solid #f0f0f0;border-right:1px solid #f0f0f0"></div>
<div class="a" style="left:988px;top:522px;width:28px;height:3px;background:repeating-linear-gradient(90deg,#a2a2a2 0 1px,rgba(0,0,0,0) 1px 2px)"></div><div class="a" style="left:988px;top:523px;width:28px;height:1px;background:#d6d6d6"></div>
<div class="a" style="left:984px;top:592px;width:35px;height:103px;background:#d6d6d6;border-left:1px solid #f0f0f0;border-top:1px solid #f0f0f0;border-right:1px solid #f0f0f0"></div>
<div class="a" style="left:988px;top:596px;width:28px;height:3px;background:repeating-linear-gradient(90deg,#a2a2a2 0 1px,rgba(0,0,0,0) 1px 2px)"></div><div class="a" style="left:988px;top:597px;width:28px;height:1px;background:#d6d6d6"></div>
<svg class="a" style="left:984px;top:102px" width="36" height="594" viewBox="984 102 36 594">
<defs><linearGradient id="rw" x1="0" y1="0" x2="1" y2="1"><stop offset="0" stop-color="#fff"/><stop offset="1" stop-color="#aaa"/></linearGradient><linearGradient id="rh" x1="0" y1="0" x2="1" y2="0"><stop offset="0" stop-color="#fff"/><stop offset="1" stop-color="#111"/></linearGradient><radialGradient id="rb" cx=".4" cy=".35" r=".7"><stop offset="0" stop-color="#666"/><stop offset="1" stop-color="#000"/></radialGradient><radialGradient id="rk" cx=".4" cy=".3" r=".7"><stop offset="0" stop-color="#999"/><stop offset="1" stop-color="#111"/></radialGradient></defs>
<path d="M993 129c0-5 6-9 12-9 5 0 7 3 5.500 5.500-1 1.800-2.500 1.500-2.500 3s2 1 2 3c0 3-5 4.500-9 4.500-5 0-8-3-8-7z" fill="url(#rk)"/><circle cx="998" cy="127" r="1.400" fill="#eee"/><circle cx="1002" cy="123.500" r="1.400" fill="#eee"/><circle cx="1006" cy="123" r="1.400" fill="#eee"/><circle cx="997.500" cy="131.500" r="1.400" fill="#eee"/><circle cx="1003" cy="132.500" r="1.600" fill="#eee"/>
<path d="M993.500 150v16h16c0-9-7-16-16-16z" fill="url(#rh)" stroke="#111" stroke-width="1"/><path d="M993.500 166l5-15M993.500 166l10-11.500M993.500 166l14-6" stroke="#555" stroke-width=".6"/><path d="M993 166.500h17" stroke="#000" stroke-width="1.500"/>
<rect x="993" y="195" width="17" height="13" fill="#222"/><rect x="994" y="196" width="3" height="3" fill="#444"/><rect x="998" y="196" width="3" height="3" fill="#777"/><rect x="1002" y="196" width="3" height="3" fill="#999"/><rect x="1006" y="196" width="3" height="3" fill="#ddd"/><rect x="994" y="200" width="3" height="3" fill="#666"/><rect x="998" y="200" width="3" height="3" fill="#aaa"/><rect x="1002" y="200" width="3" height="3" fill="#555"/><rect x="1006" y="200" width="3" height="3" fill="#fff"/><rect x="994" y="204" width="3" height="3" fill="#333"/><rect x="998" y="204" width="3" height="3" fill="#eee"/><rect x="1002" y="204" width="3" height="3" fill="#fff"/><rect x="1006" y="204" width="3" height="3" fill="#eee"/>
<rect x="999.500" y="234.500" width="7" height="6" rx="1" fill="#eee" stroke="#000" stroke-width="1.600"/><path d="M1001 234l-3-6c-1-2-2-3-3-2.500s0 3 1.500 4.500zM1003 234v-8M1005 234l2-4c1.500-1 3.500-.5 3 1s-2 1-3 2z" fill="#222" stroke="#222" stroke-width="1"/>
<circle cx="1001.500" cy="258.500" r="4" fill="#1a1a1a"/><circle cx="997.500" cy="263.500" r="4" fill="#1a1a1a"/><circle cx="1005.500" cy="263.500" r="4" fill="#1a1a1a"/><path d="M1001.500 262c0 4-1 6-3.500 7h7c-2.500-1-3.500-3-3.500-7z" fill="#111"/>
<path d="M993 299.500h17" stroke="#222" stroke-width="1" stroke-dasharray="2 1"/><path d="M993 305.500h17" stroke="#222" stroke-width="2"/><path d="M993 310.500h17" stroke="#222" stroke-width="3"/>
<rect x="993.500" y="329.500" width="16" height="11" fill="url(#rh)" stroke="#111" stroke-width="1"/><path d="M993.500 341h16.500v-11.500" fill="none" stroke="#000" stroke-width="1"/>
<circle cx="999" cy="362" r="5.500" fill="url(#rk)"/><circle cx="1003.500" cy="367" r="5.500" fill="#ddd" fill-opacity=".75" stroke="#444" stroke-width="1"/>
<path d="M1002 406l9 5-9 6.500-9-6.500z" fill="#222"/><path d="M1002 400.500l9 5-9 6-9-6z" fill="#eee" stroke="#888" stroke-width=".8"/><path d="M1002 412l9-6v1l-9 6-9-6v-1z" fill="#999"/>
<path d="M992.500 430.500h7l3 3v10h-10z" fill="url(#rw)" stroke="#666" stroke-width="1"/><path d="M997.500 438.500h9l3 3v6.500h-12z" fill="url(#rw)" stroke="#444" stroke-width="1"/><path d="M997.500 448.500h12.500" stroke="#222" stroke-width="1"/>
<circle cx="1001.500" cy="469.500" r="8" fill="#eee" stroke="#222" stroke-width="1" stroke-dasharray="1 1"/><circle cx="1001.500" cy="469.500" r="6" fill="url(#rb)"/>
<rect x="997.500" y="491.500" width="12" height="12" fill="url(#rw)" stroke="#333" stroke-width="1"/><path d="M997.500 504h12.500v-12.500" fill="none" stroke="#111" stroke-width="1"/><rect x="995.500" y="501.500" width="5" height="5" fill="#777" stroke="#111" stroke-width="1.200"/><rect x="993.500" y="499.500" width="5" height="5" fill="#fff" stroke="#111" stroke-width="1.200"/>
<circle cx="1001.500" cy="543.500" r="5.500" fill="none" stroke="#222" stroke-width="1.500"/><circle cx="1001.500" cy="543.500" r="1.800" fill="#222"/><path d="M1001.500 534v19M992 543.500h19M995 537l13 13M1008 537l-13 13" stroke="#222" stroke-width="1.100"/>
<circle cx="1001.500" cy="573" r="9" fill="url(#rk)"/><text x="1001.500" y="579" text-anchor="middle" font-family="Liberation Serif,serif" font-weight="bold" font-size="16" fill="#fff">i</text>
<text x="1002" y="624" text-anchor="middle" font-family="Liberation Sans,sans-serif" font-weight="bold" font-size="18" fill="#222">¶</text>
<text x="992.500" y="653" font-family="Liberation Serif,serif" font-style="italic" font-size="19" fill="#111">O</text><text x="1003" y="658" font-family="Liberation Serif,serif" font-style="italic" font-weight="bold" font-size="13" fill="#111">T</text>
<text x="994.500" y="685.500" font-family="Liberation Sans,sans-serif" font-size="19" fill="#222">A</text><path d="M1008.500 669v18" stroke="#111" stroke-width="1.200"/>
</svg>


<!-- ===== taskbar ===== -->
<div class="a" id="taskbar" style="left:0;top:738px;width:1024px;height:30px;background:#d4d0c8"></div>
<div class="a" style="left:0;top:739px;width:1024px;height:1px;background:#fff"></div>
<div class="a btn" style="left:2px;top:742px;width:47px;height:22px"></div>
<svg class="a" style="left:5px;top:745px" width="16" height="15" viewBox="0 0 16 15"><path d="M1.500 2.500c2-1.200 4-1.200 5.500-.2l-1.200 4.700c-1.700-.9-3.600-.8-5.500.2z" fill="#e8562a"/><path d="M8 2.700c2 1 4 .8 5.800-.3l-1.300 4.700c-1.800 1-3.700 1.200-5.700.2z" fill="#6cb43c"/><path d="M.2 8.200c2-1.100 3.800-1.100 5.400-.2l-1.200 4.600c-1.700-.9-3.600-.8-5.400.2z" fill="#3c78d8" transform="translate(.5,0)"/><path d="M6.600 8.400c2 1 3.800.9 5.700-.2l-1.300 4.700c-1.800 1-3.600 1.100-5.600.1z" fill="#f4c024"/></svg>
<div class="a cj" style="left:22px;top:746px;font-weight:bold">开始</div>
<!-- quick launch -->
<svg class="a" style="left:56px;top:745px" width="17" height="17" viewBox="0 0 17 17"><circle cx="8.500" cy="8.500" r="7.300" fill="#fff"/><path d="M8.500 8.500V1.200A7.300 7.300 0 0 0 1.200 8.500z" fill="#e8622a"/><path d="M8.500 8.500V1.200A7.300 7.300 0 0 1 15.800 8.500z" fill="#58b030"/><path d="M8.500 8.500H1.200A7.300 7.300 0 0 0 8.500 15.800z" fill="#3078d8"/><path d="M8.500 8.500H15.800A7.300 7.300 0 0 1 8.500 15.800z" fill="#f0c428"/><circle cx="8.500" cy="8.500" r="4" fill="#f4f4f4"/><path d="M6.500 5.200v6.600l5.200-3.300z" fill="#222"/></svg>
<svg class="a" style="left:79px;top:745px" width="17" height="17" viewBox="0 0 17 17"><rect x="1.500" y="2" width="13" height="14" rx="2.500" fill="#2a78e0" transform="rotate(-5 8 9)"/><rect x="3.500" y="4" width="9" height="10" rx="1.500" fill="#f8f0c8" transform="rotate(-5 8 9)"/><path d="M5.500 9.500h4.500M8 7l2.800 2.500-2.800 2.500" fill="none" stroke="#2a58a8" stroke-width="1.400"/><circle cx="14.300" cy="5.500" r="1.300" fill="#d8421a"/></svg>
<svg class="a" style="left:101px;top:744px" width="20" height="19" viewBox="0 0 20 19"><text x="3" y="16.500" font-family="Liberation Sans,sans-serif" font-weight="bold" font-size="21" fill="#2a8ae4">e</text><path d="M2.500 16.500c-2.500-3 3-11.500 14-13.500-5 2-10 6-12 10.500" fill="none" stroke="#58b4f0" stroke-width="1.300"/></svg>
<div class="a" style="left:130px;top:740px;font:bold 15px/16px 'Liberation Sans',sans-serif;color:#000;letter-spacing:-1px">»</div>
<!-- task button -->
<div class="a chk" style="left:143px;top:742px;width:160px;height:22px;border:1px solid;border-color:#404040 #fff #fff #404040;box-shadow:inset 1px 1px 0 #808080"></div>
<div class="a" style="left:148px;top:745px;width:16px;height:16px;background:linear-gradient(#e88a10,#c05c00);border:1px solid #9a5000;border-bottom-color:#7a3c00;font:bold 10px/14px 'Liberation Sans',sans-serif;color:#ffc83c;text-align:center;letter-spacing:-.5px">Ai</div>
<div class="a cj" style="left:167px;top:747px">未标题<i>-1* @ 68% (CM...</i></div>
<!-- tray -->
<svg class="a" style="left:957px;top:746px" width="19" height="17" viewBox="0 0 19 17"><path d="M5 1.500c1 2 1.500 2 2 0s1.500 2 2 0 1.500 2 2 0 1.500 2 2 0v3" fill="none" stroke="#222" stroke-width=".9"/><rect x="1.500" y="4.500" width="16" height="10" rx="2" fill="#fff" stroke="#000" stroke-width="1.500"/><path d="M3.500 7.500h12M3.500 9.500h12M3.500 11.500h12" stroke="#222" stroke-width="1.200" stroke-dasharray="1 1"/></svg>
<div class="a" style="left:978px;top:742px;width:2px;height:24px;border-left:1px solid #808080;border-right:1px solid #fff"></div>
<div class="a" style="left:985px;top:742px;width:37px;height:24px;border:1px solid;border-color:#808080 #fff #fff #808080"></div>
<div class="a" style="left:989px;top:745px;font:bold 16px/16px 'Liberation Sans',sans-serif;color:#000;letter-spacing:-1.500px">«</div>
<svg class="a" style="left:1002px;top:745px" width="18" height="17" viewBox="0 0 18 17"><rect x="1.500" y="4.500" width="8" height="7" fill="#3a3a7c" stroke="#5a78d0" stroke-width="1"/><ellipse cx="5.500" cy="14" rx="4" ry="2" fill="#dfe6f8" stroke="#4a68c8" stroke-width="1"/><path d="M11.500 3.500c1.300 1.500 1.300 4 0 5.500M14 1.500c2.200 2.800 2.200 6.500 0 9.300" fill="none" stroke="#777" stroke-width=".9"/></svg>
</body>
</html>
